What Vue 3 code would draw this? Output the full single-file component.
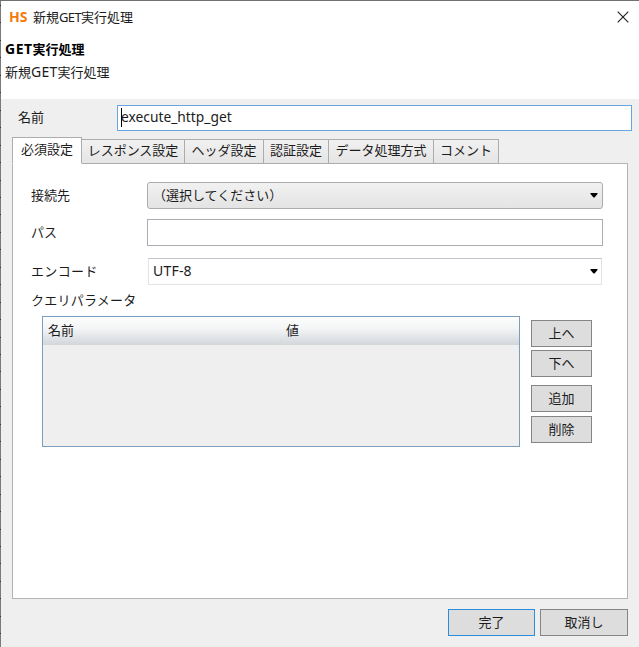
<script setup>
import { ref } from 'vue'

const tabs = [
  { label: '必須設定', cls: 't-required' },
  { label: 'レスポンス設定', cls: 't-response' },
  { label: 'ヘッダ設定', cls: 't-header' },
  { label: '認証設定', cls: 't-auth' },
  { label: 'データ処理方式', cls: 't-data' },
  { label: 'コメント', cls: 't-comment' },
]
const active = ref(0)
const actions = ['上へ', '下へ', '追加', '削除']
</script>

<template>
  <div class="window">
    <header class="head">
      <div class="titlebar">
        <span class="logo">HS</span>
        <span class="title">新規<span class="lat">GET</span>実行処理</span>
        <svg class="close" width="12" height="12" viewBox="0 0 12 12">
          <path d="M0.7 0.7L11.3 11.3M11.3 0.7L0.7 11.3" fill="none" stroke="#222" stroke-width="1.15" />
        </svg>
      </div>
      <div class="heading"><span class="latb">GET</span>実行処理</div>
      <div class="sub">新規<span class="lats">GET</span>実行処理</div>
    </header>

    <div class="name-row">
      <span class="name-label">名前</span>
      <div class="name-input"><i class="caret"></i><span class="name-value">execute_http_get</span></div>
    </div>

    <nav class="tabs">
      <div
        v-for="(t, i) in tabs"
        :key="t.label"
        class="tab"
        :class="[t.cls, { active: i === active }]"
        @click="active = i"
      >{{ t.label }}</div>
    </nav>

    <main class="panel">
      <div class="row">
        <span class="label">接続先</span>
        <div class="select">
          <span class="choice">（選択してください）</span>
          <svg class="arrow" width="8" height="5" viewBox="0 0 8 5"><path d="M0.5 0H7.5V1L4.5 4.6H3.5L0.5 1Z" /></svg>
        </div>
      </div>
      <div class="row row-path">
        <span class="label">パス</span>
        <div class="text"></div>
      </div>
      <div class="row row-encode">
        <span class="label wide">エンコード</span>
        <div class="combo">
          <span class="utf">UTF-8</span>
          <svg class="arrow" width="8" height="5" viewBox="0 0 8 5"><path d="M0.5 0H7.5V1L4.5 4.6H3.5L0.5 1Z" /></svg>
        </div>
      </div>
      <div class="query-label">クエリパラメータ</div>
      <div class="query">
        <div class="table">
          <div class="thead"><span class="col-name">名前</span><span>値</span></div>
        </div>
        <div class="actions">
          <div v-for="(a, i) in actions" :key="a" class="btn small" :class="{ gap: i === 2, last: i === 3 }">{{ a }}</div>
        </div>
      </div>
    </main>

    <footer class="footer">
      <div class="btn primary">完了</div>
      <div class="btn">取消し</div>
    </footer>
  </div>
</template>

<style>
body {
  background: #efefef;
  overflow: hidden;
}
</style>

<style scoped>
.window,
.window * {
  box-sizing: border-box;
}
.window {
  width: 639px;
  height: 647px;
  background:
    repeating-linear-gradient(#7b797b 0 5px, #333 5px 6px, #7b797b 6px 17.45px) 0 0 / 1px 100% no-repeat border-box,
    #efefef;
  border-top: 1px solid #727073;
  padding-left: 1px;
  font: 13px/20px "Noto Sans", "Noto Sans CJK JP", sans-serif;
  color: #1c1c1c;
  white-space: nowrap;
  display: flex;
  flex-direction: column;
}
.head {
  height: 98px;
  flex: none;
  background: #fff;
}
.titlebar {
  height: 31px;
  padding: 0 10px 0 8px;
  display: flex;
  align-items: center;
}
.logo {
  width: 24px;
  font: bold 14px/20px "Open Sans", sans-serif;
  color: #f47a0c;
}
.title {
  flex: 1;
}
.lat {
  letter-spacing: -0.65px;
}
.lats {
  font-size: 14px;
  line-height: 1;
  letter-spacing: 0.2px;
}
.heading {
  margin-top: 7px;
  padding-left: 4px;
  height: 23px;
  font-weight: 700;
  color: #000;
}
.latb {
  font-size: 14px;
  line-height: 1;
  letter-spacing: 0.5px;
}
.sub {
  padding-left: 4px;
}
.name-row {
  margin-top: 6px;
  height: 26px;
  flex: none;
  display: flex;
  align-items: center;
  padding-right: 7px;
}
.name-label {
  width: 116px;
  padding: 0 0 2px 17px;
}
.name-input {
  flex: 1;
  height: 26px;
  background: #fff;
  border: 1px solid #68a5e3;
  display: flex;
  align-items: center;
  padding: 0 0 1px 3px;
}
.caret {
  width: 1px;
  height: 19px;
  margin-right: -1px;
  background: #000;
}
.name-value {
  font-size: 13.8px;
  padding-bottom: 1px;
}
.tabs {
  margin: 6px 0 0 11px;
  height: 27px;
  flex: none;
  display: flex;
  align-items: flex-end;
  position: relative;
}
.tab {
  height: 25px;
  background: linear-gradient(#f1f1f1, #e5e5e5);
  border: 1px solid #acacac;
  border-left: 0;
  text-align: center;
  line-height: 21px;
}
.tab.active {
  height: 27px;
  background: #fff;
  border-left: 1px solid #acacac;
  border-bottom-color: #fff;
  line-height: 22px;
}
.t-required { width: 70px; }
.t-response { width: 103px; }
.t-header { width: 79px; }
.t-auth { width: 65px; }
.t-data { width: 105px; }
.t-comment { width: 65px; }
.panel {
  width: 616px;
  height: 436px;
  flex: none;
  margin: -1px 0 0 11px;
  background: #fff;
  border: 1px solid #b4b4b4;
  padding: 18px 24px 0 18px;
}
.row {
  display: flex;
  align-items: center;
  height: 27px;
}
.row-path {
  margin-top: 10px;
}
.row-encode {
  margin-top: 12px;
}
.label {
  width: 116px;
  padding-bottom: 2px;
}
.label.wide {
  letter-spacing: 0.35px;
}
.select,
.text,
.combo {
  width: 456px;
  height: 27px;
  display: flex;
  align-items: center;
  justify-content: space-between;
}
.select {
  border: 1px solid #acacac;
  border-radius: 3px;
  background: linear-gradient(#f1f1f1, #e4e4e4);
  padding: 0 4px 0 5px;
}
.choice {
  padding-bottom: 1px;
}
.text {
  border: 1px solid #abadb3;
  background: #fff;
}
.combo {
  width: 454px;
  margin-left: 1px;
  border: 1px solid #e0e4e9;
  border-top-color: #bfc4ca;
  padding: 0 3px 0 4px;
}
.utf {
  padding-bottom: 2px;
  font-size: 14px;
  letter-spacing: 0.2px;
}
.arrow {
  fill: #000;
}
.query-label {
  margin-top: 5px;
  height: 20px;
  letter-spacing: 0.25px;
}
.query {
  margin: 6px 0 0 11px;
  display: flex;
}
.table {
  width: 478px;
  height: 131px;
  background: #efefef;
  border: 1px solid #7b9ebd;
}
.thead {
  height: 28px;
  background: linear-gradient(#fdfdfd 0%, #f4f5f6 40%, #d2d7db 100%);
  display: flex;
  align-items: center;
  padding: 0 0 2px 5px;
}
.col-name {
  width: 238px;
}
.actions {
  margin-left: 11px;
  padding-top: 4px;
  display: flex;
  flex-direction: column;
  gap: 3px;
}
.btn {
  width: 88px;
  height: 27px;
  background: #ddd;
  border: 1px solid #858585;
  text-align: center;
  line-height: 24px;
}
.btn.small {
  width: 61px;
}
.btn.gap {
  margin-top: 5px;
}
.btn.last {
  margin-top: 1px;
}
.btn.primary {
  width: 87px;
  border-color: #2b8ddd;
}
.footer {
  margin-top: 10px;
  padding-right: 11px;
  display: flex;
  justify-content: flex-end;
  gap: 5px;
}
</style>
